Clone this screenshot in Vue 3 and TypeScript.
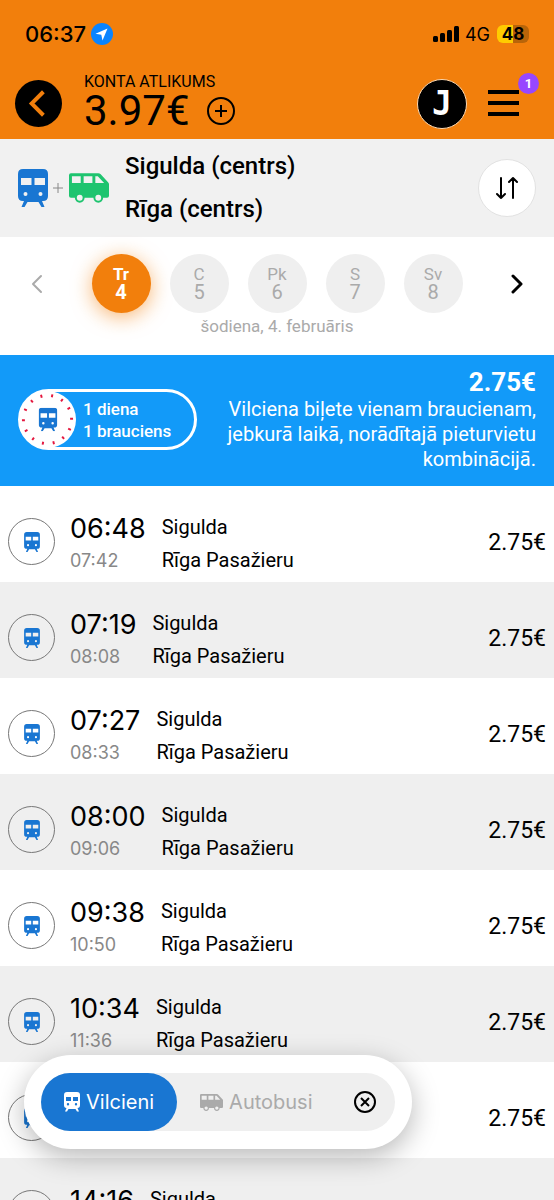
<script setup lang="ts">
import { ref } from 'vue'

interface Day {
  name: string
  date: number
}

interface Trip {
  departs: string
  arrives: string
  from: string
  to: string
  price: string
}

const days: Day[] = [
  { name: 'Tr', date: 4 },
  { name: 'C', date: 5 },
  { name: 'Pk', date: 6 },
  { name: 'S', date: 7 },
  { name: 'Sv', date: 8 },
]

const times: [string, string][] = [
  ['06:48', '07:42'],
  ['07:19', '08:08'],
  ['07:27', '08:33'],
  ['08:00', '09:06'],
  ['09:38', '10:50'],
  ['10:34', '11:36'],
  ['12:38', '13:44'],
  ['14:16', '15:20'],
]

const trips: Trip[] = times.map(([departs, arrives]) => ({
  departs,
  arrives,
  from: 'Sigulda',
  to: 'Rīga Pasažieru',
  price: '2.75€',
}))

const selectedDay = ref(4)
const mode = ref<'train' | 'bus'>('train')
const ticks = Array.from({ length: 14 }, (_, i) => 11 + i * (360 / 14))
</script>

<template>
  <div class="app">
    <svg class="symbols" aria-hidden="true">
      <symbol id="train" viewBox="0 0 30 38">
        <path
          fill="currentColor"
          fill-rule="evenodd"
          d="M5 0H25Q30 0 30 5V27Q30 32 25 32H24L26.500 38H23.500L20.500 33H9.500L6.500 38H3.500L6 32H5Q0 32 0 27V5Q0 0 5 0ZM3 9V16H13.500V9ZM16.500 9V16H27V9ZM7.500 23A2 2 0 1 0 7.500 27A2 2 0 1 0 7.500 23ZM22.500 23A2 2 0 1 0 22.500 27A2 2 0 1 0 22.500 23Z"
        />
      </symbol>
      <symbol id="van" viewBox="0 0 41 30">
        <path
          fill="currentColor"
          fill-rule="evenodd"
          d="M2 0H30Q31.500 0 32.500 1L40 9Q41 10 41 11V23Q41 25 39 25H35A5 5 0 0 1 25 25H16A5 5 0 0 1 6 25H2Q0 25 0 23V2Q0 0 2 0ZM3 3V10H12V3ZM15 3V10H24V3ZM27 3V10H36L29.500 3Z"
        />
        <circle cx="11" cy="25" r="3" fill="#f1f1f1" />
        <circle cx="30" cy="25" r="3" fill="#f1f1f1" />
      </symbol>
    </svg>

    <header class="top">
      <div class="status">
        <span class="clock">06:37</span>
        <svg class="location" viewBox="0 0 22 22" aria-hidden="true">
          <circle cx="11" cy="11" r="11" fill="#0a84ff" />
          <path d="M16.500 5.500L4.500 10.800L10.300 11.700L11.500 17.500Z" fill="#fff" />
        </svg>
        <svg class="signal" viewBox="0 0 26 16" aria-hidden="true">
          <rect x="0" y="10" width="5" height="6" rx="1.500" />
          <rect x="7" y="7" width="5" height="9" rx="1.500" />
          <rect x="14" y="4" width="5" height="12" rx="1.500" />
          <rect x="21" y="0" width="5" height="16" rx="1.500" />
        </svg>
        <span class="network">4G</span>
        <span class="battery">48</span>
      </div>
      <div class="account">
        <button class="back" type="button" aria-label="Atpakaļ">
          <svg viewBox="0 0 48 48"><path d="M29 12L17 24L29 36" /></svg>
        </button>
        <div class="balance">
          <span class="balance-label">KONTA ATLIKUMS</span>
          <div class="balance-row">
            <strong class="amount">3.97€</strong>
            <button class="add" type="button" aria-label="Papildināt">
              <svg viewBox="0 0 30 30"><circle cx="15" cy="15" r="13" /><path d="M15 9V21M9 15H21" /></svg>
            </button>
          </div>
        </div>
        <button class="avatar" type="button">J</button>
        <button class="menu" type="button" aria-label="Izvēlne">
          <svg viewBox="0 0 31 27"><path d="M0 2H31M0 13H31M0 24H31" /></svg>
          <span class="badge">1</span>
        </button>
      </div>
    </header>

    <section class="route">
      <svg class="route-train"><use href="#train" /></svg>
      <svg class="plus" viewBox="0 0 10 10"><path d="M5 0V10M0 5H10" /></svg>
      <svg class="route-van"><use href="#van" /></svg>
      <div class="stops">
        <span>Sigulda (centrs)</span>
        <span>Rīga (centrs)</span>
      </div>
      <button class="swap" type="button" aria-label="Mainīt virzienu">
        <svg viewBox="0 0 24 24"><path d="M6 2V22M2 18L6 22L10 18M18 22V2M14 6L18 2L22 6" /></svg>
      </button>
    </section>

    <section class="dates">
      <div class="days">
        <button class="step previous" type="button" aria-label="Iepriekšējās dienas">
          <svg viewBox="0 0 12 20"><path d="M10 2L2 10L10 18" /></svg>
        </button>
        <div class="day-list">
          <button
            v-for="day in days"
            :key="day.date"
            type="button"
            class="day"
            :class="{ selected: selectedDay === day.date }"
            @click="selectedDay = day.date"
          >
            <span class="day-name">{{ day.name }}</span>
            <span class="day-number">{{ day.date }}</span>
          </button>
        </div>
        <button class="step next" type="button" aria-label="Nākamās dienas">
          <svg viewBox="0 0 12 20"><path d="M2 2L10 10L2 18" /></svg>
        </button>
      </div>
      <p class="today">šodiena, 4. februāris</p>
    </section>

    <section class="offer">
      <div class="ticket">
        <svg class="dial" viewBox="0 0 58 58">
          <circle cx="29" cy="29" r="29" fill="#fff" />
          <path
            v-for="angle in ticks"
            :key="angle"
            d="M29 3V6"
            stroke="#e4173e"
            stroke-width="2"
            :transform="`rotate(${angle} 29 29)`"
          />
          <use href="#train" x="20" y="17" width="19" height="24" />
        </svg>
        <div class="ticket-text">
          <span>1 diena</span>
          <span>1 brauciens</span>
        </div>
      </div>
      <div class="offer-text">
        <strong>2.75€</strong>
        <p>Vilciena biļete vienam braucienam, jebkurā laikā, norādītajā pieturvietu kombinācijā.</p>
      </div>
    </section>

    <ul class="trips">
      <li v-for="trip in trips" :key="trip.departs">
        <button class="trip" type="button">
          <span class="trip-icon"><svg><use href="#train" /></svg></span>
          <span class="times">
            <span class="departs">{{ trip.departs }}</span>
            <span class="arrives">{{ trip.arrives }}</span>
          </span>
          <span class="stations">
            <span>{{ trip.from }}</span>
            <span>{{ trip.to }}</span>
          </span>
          <span class="price">{{ trip.price }}</span>
        </button>
      </li>
    </ul>

    <nav class="filter">
      <div class="filter-track">
        <button class="mode" type="button" :class="{ active: mode === 'train' }" @click="mode = 'train'">
          <svg class="mode-train" viewBox="0 0 16 20">
            <path
              fill="currentColor"
              fill-rule="evenodd"
              d="M3 0H13Q16 0 16 3V13Q16 16 13.500 16L15 19.500H13L11.500 17H4.500L3 19.500H1L2.500 16Q0 16 0 13V3Q0 0 3 0ZM2 5V9H7V5ZM9 5V9H14V5ZM4 11A1.200 1.200 0 1 0 4 13.400A1.200 1.200 0 1 0 4 11ZM12 11A1.200 1.200 0 1 0 12 13.400A1.200 1.200 0 1 0 12 11Z"
            />
          </svg>
          Vilcieni
        </button>
        <button class="mode" type="button" :class="{ active: mode === 'bus' }" @click="mode = 'bus'">
          <svg class="mode-van"><use href="#van" /></svg>
          Autobusi
        </button>
        <button class="clear" type="button" aria-label="Notīrīt filtru">
          <svg viewBox="0 0 24 24"><circle cx="12" cy="12" r="10" /><path d="M8 8L16 16M16 8L8 16" /></svg>
        </button>
      </div>
    </nav>
  </div>
</template>

<style>
body {
  margin: 0;
}
</style>

<style scoped>
.app {
  position: relative;
  display: flex;
  flex-direction: column;
  height: 100vh;
  overflow: hidden;
  background: #fff;
  color: #000;
  font-family: Roboto, 'Noto Sans', sans-serif;
}

.symbols {
  position: absolute;
  width: 0;
  height: 0;
}

button {
  flex: none;
  margin: 0;
  padding: 0;
  border: 0;
  background: none;
  color: inherit;
  font: inherit;
  cursor: pointer;
}

svg {
  display: block;
  flex: none;
}

.top {
  flex: none;
  background: #f27f0c;
}

.status {
  display: flex;
  align-items: center;
  height: 68px;
  padding: 0 25px;
  font-family: Inter, sans-serif;
}

.clock {
  font-size: 22px;
  font-weight: 500;
}

.location {
  width: 22px;
  height: 22px;
  margin: 0 auto 0 5px;
}

.signal {
  width: 26px;
  height: 16px;
}

.network {
  margin: 0 7px 0 6px;
  font-size: 18px;
}

.battery {
  width: 32px;
  border-radius: 6px;
  background: linear-gradient(90deg, #ffcc00 50%, #b86409 50%);
  font-size: 17px;
  font-weight: 700;
  line-height: 18px;
  text-align: center;
}

.account {
  display: flex;
  align-items: center;
  height: 71px;
  padding: 0 35px 0 15px;
}

.back {
  width: 47px;
  height: 47px;
  border-radius: 50%;
  background: #000;
}

.back svg {
  width: 47px;
  height: 47px;
  fill: none;
  stroke: #f27f0c;
  stroke-width: 4;
}

.balance {
  flex: 1;
  padding-bottom: 3px;
  margin-left: 22px;
}

.balance-label {
  display: block;
  font-size: 16px;
  line-height: 18px;
}

.balance-row {
  display: flex;
  align-items: center;
  gap: 16px;
}

.amount {
  font-size: 42px;
  font-weight: 400;
  line-height: 40px;
}

.add svg {
  width: 30px;
  height: 30px;
  fill: none;
  stroke: #000;
  stroke-width: 2;
}

.avatar {
  width: 50px;
  height: 50px;
  border: 1px solid #ffd9b0;
  border-radius: 50%;
  background: #000;
  color: #fff;
  font-family: 'DejaVu Sans Mono', monospace;
  font-size: 33px;
  font-weight: 700;
  line-height: 46px;
}

.menu {
  position: relative;
  margin-left: 21px;
}

.menu svg {
  width: 31px;
  height: 27px;
  fill: none;
  stroke: #000;
  stroke-width: 4;
}

.badge {
  position: absolute;
  top: -17px;
  right: -20px;
  width: 21px;
  border-radius: 50%;
  background: #9747ff;
  color: #fff;
  font-size: 13px;
  font-weight: 700;
  line-height: 21px;
}

.route {
  display: flex;
  flex: none;
  align-items: center;
  height: 98px;
  padding: 0 18px;
  background: #f1f1f1;
}

.route-train {
  width: 30px;
  height: 38px;
  color: #1976d2;
}

.plus {
  width: 10px;
  height: 10px;
  margin: 0 6px 0 5px;
  stroke: #888;
  stroke-width: 1;
}

.route-van {
  width: 40px;
  height: 30px;
  color: #1ec46f;
}

.stops {
  display: flex;
  flex: 1;
  flex-direction: column;
  margin-left: 16px;
  font-size: 24px;
  font-weight: 500;
  line-height: 43px;
}

.swap {
  display: grid;
  place-items: center;
  width: 58px;
  height: 58px;
  border: 1px solid #e2e2e2;
  border-radius: 50%;
  background: #fff;
}

.swap svg {
  width: 24px;
  height: 24px;
  fill: none;
  stroke: #000;
  stroke-width: 2;
  stroke-linecap: round;
  stroke-linejoin: round;
}

.dates {
  flex: none;
  padding: 17px 31px;
  color: #aaa;
}

.days {
  display: flex;
  align-items: center;
  justify-content: space-between;
}

.step svg {
  width: 12px;
  height: 20px;
  fill: none;
  stroke: #aaa;
  stroke-width: 2;
  stroke-linecap: round;
  stroke-linejoin: round;
}

.next svg {
  stroke: #000;
  stroke-width: 3;
}

.day-list {
  display: flex;
  gap: 19px;
}

.day {
  display: flex;
  flex-direction: column;
  align-items: center;
  justify-content: center;
  box-sizing: border-box;
  width: 59px;
  height: 59px;
  padding-bottom: 2px;
  border-radius: 50%;
  background: #efefef;
}

.day-name {
  font-size: 17px;
  line-height: 18px;
}

.day-number {
  font-size: 20px;
  line-height: 18px;
}

.selected {
  background: #f27f0c;
  box-shadow: 0 4px 20px #f27f0c90;
  color: #fff;
  font-weight: 700;
}

.today {
  margin: 2px 0 1px;
  font-size: 17px;
  line-height: 22px;
  text-align: center;
}

.offer {
  display: flex;
  flex: none;
  align-items: center;
  justify-content: space-between;
  gap: 20px;
  padding: 12px 18px 14px;
  background: #129af9;
  color: #fff;
}

.ticket {
  display: flex;
  flex: none;
  align-items: center;
  gap: 7px;
  box-sizing: border-box;
  width: 179px;
  height: 61px;
  border: 3px solid #fff;
  border-radius: 31px;
}

.dial {
  width: 57px;
  height: 57px;
  margin-left: -2px;
  color: #1976d2;
}

.ticket-text {
  display: flex;
  flex-direction: column;
  font-size: 17px;
  font-weight: 500;
  line-height: 22px;
}

.offer-text {
  width: 320px;
  text-align: right;
}

.offer-text strong {
  display: block;
  font-size: 26px;
  line-height: 30px;
}

.offer-text p {
  margin: 0;
  font-size: 20px;
  line-height: 25px;
}

.trips {
  flex: 1;
  min-height: 0;
  margin: 0;
  padding: 0;
  overflow-y: auto;
  scrollbar-width: none;
  list-style: none;
}

.trips li:nth-child(even) {
  background: #efefef;
}

.trip {
  display: flex;
  align-items: flex-start;
  box-sizing: border-box;
  width: 100%;
  height: 96px;
  padding: 25px 8px 5px;
  text-align: left;
}

.trip-icon {
  display: grid;
  place-items: center;
  box-sizing: border-box;
  width: 47px;
  height: 47px;
  margin: 7px 15px 0 0;
  border: 1px solid #777;
  border-radius: 50%;
  color: #1976d2;
}

.trip-icon svg {
  width: 16px;
  height: 20px;
}

.times,
.stations {
  display: flex;
  flex-direction: column;
  font-size: 20px;
  line-height: 33px;
}

.times {
  margin-right: 16px;
  font-family: Inter, sans-serif;
}

.departs {
  font-size: 27px;
  line-height: 35px;
}

.arrives {
  color: #888;
  font-size: 18px;
  line-height: 29px;
}

.price {
  margin: 15px 0 0 auto;
  font-size: 23px;
  line-height: 33px;
}

.filter {
  position: absolute;
  bottom: 51px;
  left: 24px;
  padding: 18px 17px;
  border-radius: 47px;
  background: #fff;
  box-shadow: 0 8px 28px #00000048;
}

.filter-track {
  display: flex;
  align-items: center;
  border-radius: 29px;
  background: #efefef;
  color: #aaa;
  font-family: Inter, sans-serif;
  font-size: 20px;
}

.mode {
  display: flex;
  align-items: center;
  justify-content: center;
  gap: 6px;
  height: 58px;
  padding: 0 23px;
  border-radius: 29px;
}

.mode.active {
  background: #1976d2;
  color: #fff;
}

.mode-train {
  width: 16px;
  height: 20px;
}

.mode-van {
  width: 23px;
  height: 17px;
}

.clear {
  margin: 0 18px 0 17px;
  color: #000;
}

.clear svg {
  width: 24px;
  height: 24px;
  fill: none;
  stroke: currentColor;
  stroke-width: 2;
}
</style>
